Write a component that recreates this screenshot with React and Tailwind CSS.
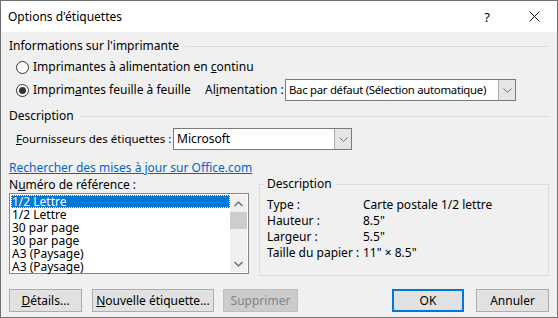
import React from 'react';

function Radio({ checked }) {
  return (
    <span className="w-[13px] h-[13px] rounded-full border border-[#333] bg-white flex items-center justify-center shrink-0">
      {checked && <span className="w-[7px] h-[7px] rounded-full bg-[#333]" />}
    </span>
  );
}

function Chevron({ up }) {
  return (
    <svg width="9" height="6" viewBox="0 0 9 6">
      <path d={up ? 'M0.5 5 L4.5 1 L8.5 5' : 'M0.5 1 L4.5 5 L8.5 1'} fill="none" stroke="#606060" strokeWidth="1.2" />
    </svg>
  );
}

function Combo({ value, className, textClass = '' }) {
  return (
    <div className={`flex h-[22px] border border-[#7a7a7a] bg-white shrink-0 ${className}`}>
      <div className={`flex-1 pl-[3px] flex items-center whitespace-nowrap overflow-hidden ${textClass}`}>{value}</div>
      <div className="w-[17px] border-l border-[#adadad] bg-[#e5e5e5] flex items-center justify-center">
        <svg width="9" height="5" viewBox="0 0 9 5">
          <path d="M0.5 0.5 L4.5 4.5 L8.5 0.5" fill="none" stroke="#707070" strokeWidth="1" />
        </svg>
      </div>
    </div>
  );
}

function GroupTitle({ children }) {
  return (
    <div className="flex items-center gap-[6px] h-[16px]">
      <span>{children}</span>
      <span className="flex-1 h-px bg-[#dcdcdc]" />
    </div>
  );
}

function Button({ children, className = '', disabled, primary }) {
  return (
    <button
      className={`h-[23px] flex items-center justify-center ${
        primary
          ? 'border-2 border-[#0078d7] bg-[#e1e1e1]'
          : disabled
          ? 'border border-[#bfbfbf] bg-[#cccccc] text-[#838383]'
          : 'border border-[#adadad] bg-[#e1e1e1]'
      } ${className}`}
    >
      {children}
    </button>
  );
}

export default function App() {
  const items = ['1/2 Lettre', '1/2 Lettre', '30 par page', '30 par page', 'A3 (Paysage)', 'A3 (Paysage)'];
  const details = [
    ['Type :', 'Carte postale 1/2 lettre'],
    ['Hauteur :', '8.5"'],
    ['Largeur :', '5.5"'],
    ['Taille du papier :', '11" × 8.5"'],
  ];
  return (
    <div className="w-[558px] h-[318px] flex flex-col border border-[#6f6f6f] bg-[#f0f0f0] text-[12px] leading-[16px] whitespace-nowrap text-black font-['Noto_Sans',sans-serif] overflow-hidden">
      {/* Title bar */}
      <div className="h-[31px] bg-white flex items-center pl-[7px] shrink-0">
        <span className="flex-1">Options d'étiquettes</span>
        <span className="w-[46px] text-center text-[13px] pr-[2px]">?</span>
        <span className="w-[46px] flex justify-center">
          <svg width="11" height="11" viewBox="0 0 11 11">
            <path d="M0.5 0.5 L10.5 10.5 M10.5 0.5 L0.5 10.5" stroke="#111" strokeWidth="1" />
          </svg>
        </span>
      </div>

      <div className="flex-1 px-[8px] pt-[6px] flex flex-col">
        <GroupTitle>Informations sur l'imprimante</GroupTitle>
        <div className="pl-[7px] mt-[3px] h-[20px] flex items-center gap-[4px]">
          <Radio />
          <span>Imprimantes à alimentation en <u>c</u>ontinu</span>
        </div>
        <div className="pl-[7px] mt-[2px] h-[22px] flex items-center">
          <Radio checked />
          <span className="ml-[4px] w-[172px]">Imprim<u>a</u>ntes feuille à feuille</span>
          <span className="w-[80px]">Al<u>i</u>mentation :</span>
          <Combo
            value="Bac par défaut (Sélection automatique)"
            className="w-[231px]"
            textClass="text-[11.4px] tracking-[-0.3px]"
          />
        </div>

        <div className="mt-[7px]">
          <GroupTitle>Description</GroupTitle>
        </div>
        <div className="pl-[7px] mt-[4px] h-[22px] flex items-center">
          <span className="w-[157px] text-[11.5px]"><u>F</u>ournisseurs des étiquettes :</span>
          <Combo value="Microsoft" className="w-[179px]" />
        </div>

        <a className="mt-[10px] text-[#0066cc] underline w-fit">Rechercher des mises à jour sur Office.com</a>
        <div className="mt-[1px]">N<u>u</u>méro de référence :</div>

        <div className="flex">
          {/* List box */}
          <div className="w-[240px] h-[81px] border border-[#828790] bg-white flex p-px">
            <div className="flex-1 flex flex-col">
              {items.map((t, i) => (
                <div
                  key={i}
                  className={`h-[13px] leading-[13px] px-px ${
                    i === 0 ? 'bg-[#0078d7] text-white outline-1 outline-dotted outline-[#ffffff] -outline-offset-1' : ''
                  }`}
                >
                  {t}
                </div>
              ))}
            </div>
            <div className="w-[17px] bg-[#f0f0f0] flex flex-col">
              <div className="h-[17px] flex items-center justify-center"><Chevron up /></div>
              <div className="h-[17px] bg-[#cdcdcd]" />
              <div className="flex-1" />
              <div className="h-[17px] flex items-center justify-center"><Chevron /></div>
            </div>
          </div>

          {/* Description group */}
          <div className="ml-[10px] flex-1 -mt-[17px] h-[100px] flex flex-col">
            <div className="flex h-[16px]">
              <span className="w-[5px] h-[8px] border-t border-l border-[#dcdcdc] self-end" />
              <span className="px-[3px]">Description</span>
              <span className="flex-1 h-[8px] border-t border-r border-[#dcdcdc] self-end" />
            </div>
            <div className="flex-1 border-l border-r border-b border-[#dcdcdc] pl-[7px] pt-[5px]">
              {details.map(([k, v]) => (
                <div key={k} className="flex h-[16px]">
                  <span className="w-[96px]">{k}</span>
                  <span>{v}</span>
                </div>
              ))}
            </div>
          </div>
        </div>

        <div className="flex mt-[13px]">
          <Button className="w-[73px]"><u>D</u>étails...</Button>
          <Button className="w-[122px] ml-[10px]"><u>N</u>ouvelle étiquette...</Button>
          <Button className="w-[75px] ml-[9px]" disabled>Supprimer</Button>
          <div className="flex-1" />
          <Button className="w-[72px]" primary>OK</Button>
          <Button className="w-[73px] ml-[12px]">Annuler</Button>
        </div>
      </div>
    </div>
  );
}
